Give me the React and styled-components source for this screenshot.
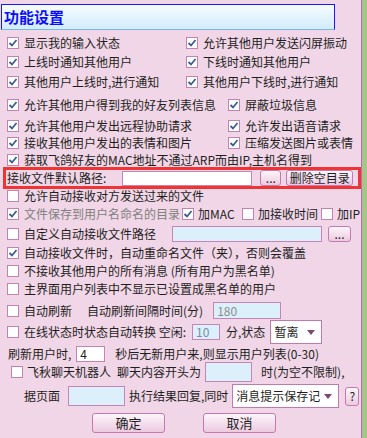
import React from 'react';
import styled, { createGlobalStyle } from 'styled-components';

const GlobalStyle = createGlobalStyle`
  html, body {
    margin: 0;
    padding: 0;
    background: #a6c48c;
  }
  body {
    font-family: "Noto Sans CJK SC", "Noto Sans", sans-serif;
    font-size: 12px;
    color: #1e1e1e;
  }
`;

const Panel = styled.div`
  width: 362px;
  height: 438px;
  background: #f0d6e6;
  border-right: 1px solid #b070a8;
  overflow: hidden;
  padding-top: 4px;
  box-sizing: border-box;
`;

const Title = styled.div`
  margin-left: 1px;
  width: 334px;
  height: 26px;
  box-sizing: border-box;
  border: 1px solid #1818ff;
  border-bottom-color: #7ab8e8;
  background: linear-gradient(#f6fcff, #d2ecfa);
  color: #0c0cff;
  font-size: 15px;
  font-weight: bold;
  line-height: 24px;
  padding-left: 2px;
`;

const Row = styled.div`
  display: flex;
  align-items: center;
  height: ${({ $h }) => $h || 16}px;
  margin-top: ${({ $mt }) => $mt || 0}px;
  padding-left: ${({ $pl }) => ($pl === undefined ? 7 : $pl)}px;
  white-space: nowrap;
  line-height: 16px;
`;

const PathBox = styled.div`
  display: flex;
  align-items: center;
  margin: -1px 0 0 3px;
  width: 358px;
  height: 22px;
  box-sizing: border-box;
  border: 3px solid #f03434;
  padding-left: 1px;
  white-space: nowrap;
  line-height: 16px;
`;

const Item = styled.label`
  display: flex;
  align-items: center;
  gap: ${({ $gap }) => ($gap === undefined ? 5 : $gap)}px;
  width: ${({ $w }) => ($w ? `${$w}px` : 'auto')};
  flex-shrink: 0;
  color: ${({ $muted }) => ($muted ? '#808080' : '#1e1e1e')};
`;

const Text = styled.span`
  margin-left: ${({ $ml }) => $ml || 0}px;
  flex-shrink: 0;
`;

const Box = styled.span`
  width: 12px;
  height: 12px;
  box-sizing: border-box;
  border: 1px solid #c282b4;
  background: #fff;
  display: inline-flex;
  align-items: center;
  justify-content: center;
  flex-shrink: 0;
`;

const Input = styled.div`
  width: ${({ $w }) => $w}px;
  height: ${({ $h }) => $h || 16}px;
  margin-left: ${({ $ml }) => $ml || 0}px;
  box-sizing: border-box;
  border: 1px solid #c684b6;
  background: ${({ $white }) => ($white ? '#fff' : '#dcf0fb')};
  color: ${({ $fg }) => $fg || '#1e1e1e'};
  font-size: 12px;
  display: flex;
  align-items: center;
  padding-left: 3px;
  flex-shrink: 0;
`;

const Button = styled.div`
  width: ${({ $w }) => $w}px;
  height: ${({ $h }) => $h || 16}px;
  margin-left: ${({ $ml }) => $ml || 0}px;
  box-sizing: border-box;
  border: 1px solid #c47ab0;
  border-radius: 3px;
  background: linear-gradient(#fdf5fa, #eccadf);
  display: flex;
  align-items: center;
  justify-content: center;
  font-size: ${({ $fs }) => $fs || 12}px;
  color: #1e1e1e;
  flex-shrink: 0;
`;

const Select = styled.div`
  width: ${({ $w }) => $w}px;
  height: 24px;
  margin-left: ${({ $ml }) => $ml || 0}px;
  box-sizing: border-box;
  border: 1px solid #c07ab0;
  background: #fff;
  display: flex;
  align-items: center;
  justify-content: space-between;
  padding: 0 6px 0 3px;
  font-size: 12px;
  flex-shrink: 0;
`;

const Arrow = styled.span`
  width: 0;
  height: 0;
  border-left: 4px solid transparent;
  border-right: 4px solid transparent;
  border-top: 5px solid #7a4a70;
`;

const Check = ({ on }) => (
  <Box>
    {on && (
      <svg width="10" height="10" viewBox="0 0 10 10">
        <path d="M1.5 5 L4 7.5 L8.5 2" fill="none" stroke="#3d5d8f" strokeWidth="1.8" />
      </svg>
    )}
  </Box>
);

const Opt = ({ on, children, ...rest }) => (
  <Item {...rest}>
    <Check on={on} />
    <span>{children}</span>
  </Item>
);

const App = () => (
  <>
    <GlobalStyle />
    <Panel>
      <Title>功能设置</Title>

      <Row $mt={5}>
        <Opt on $w={179}>显示我的输入状态</Opt>
        <Opt on>允许其他用户发送闪屏振动</Opt>
      </Row>
      <Row $mt={3}>
        <Opt on $w={179}>上线时通知其他用户</Opt>
        <Opt on>下线时通知其他用户</Opt>
      </Row>
      <Row $mt={4}>
        <Opt on $w={179}>其他用户上线时,进行通知</Opt>
        <Opt on>其他用户下线时,进行通知</Opt>
      </Row>
      <Row $mt={7}>
        <Opt on $w={221}>允许其他用户得到我的好友列表信息</Opt>
        <Opt on>屏蔽垃圾信息</Opt>
      </Row>
      <Row $mt={5}>
        <Opt on $w={221}>允许其他用户发出远程协助请求</Opt>
        <Opt on>允许发出语音请求</Opt>
      </Row>
      <Row $mt={1}>
        <Opt on $w={221}>接收其他用户发出的表情和图片</Opt>
        <Opt on>压缩发送图片或表情</Opt>
      </Row>
      <Row $mt={1}>
        <Opt on>获取飞鸽好友的MAC地址不通过ARP而由IP,主机名得到</Opt>
      </Row>

      <PathBox>
        <Text>接收文件默认路径:</Text>
        <Input $w={130} $h={15} $ml={16} $white />
        <Button $w={21} $ml={8}>...</Button>
        <Button $w={67} $ml={5}>删除空目录</Button>
      </PathBox>

      <Row $mt={-1}>
        <Opt>允许自动接收对方发送过来的文件</Opt>
      </Row>
      <Row $mt={2}>
        <Opt on $muted $w={175}>文件保存到用户名命名的目录</Opt>
        <Opt on $w={60} $gap={4}>加MAC</Opt>
        <Opt $w={79} $gap={4}>加接收时间</Opt>
        <Opt $gap={4}>加IP</Opt>
      </Row>
      <Row $mt={4}>
        <Opt>自定义自动接收文件路径</Opt>
        <Input $w={150} $ml={16} />
        <Button $w={23} $ml={6}>...</Button>
      </Row>
      <Row $mt={3}>
        <Opt on>自动接收文件时，自动重命名文件（夹），否则会覆盖</Opt>
      </Row>
      <Row $mt={2}>
        <Opt>不接收其他用户的所有消息 (所有用户为黑名单)</Opt>
      </Row>
      <Row $mt={2}>
        <Opt>主界面用户列表中不显示已设置成黑名单的用户</Opt>
      </Row>
      <Row $mt={5} $h={17}>
        <Opt>自动刷新</Opt>
        <Text $ml={15}>自动刷新间隔时间(分)</Text>
        <Input $w={68} $h={17} $ml={10} $fg="#8c8c8c">180</Input>
      </Row>
      <Row $mt={1} $h={24}>
        <Opt>在线状态时状态自动转换 空闲:</Opt>
        <Input $w={28} $ml={6} $fg="#7d8ca2">10</Input>
        <Text $ml={6}>分,状态</Text>
        <Select $w={52} $ml={5}>
          <span>暂离</span>
          <Arrow />
        </Select>
      </Row>
      <Row $mt={2} $pl={8}>
        <Text>刷新用户时,</Text>
        <Input $w={29} $ml={5} $white>4</Input>
        <Text $ml={10}>秒后无新用户来,则显示用户列表(0-30)</Text>
      </Row>
      <Row $mt={0} $h={20} $pl={11}>
        <Opt $gap={4}>飞秋聊天机器人</Opt>
        <Text $ml={6}>聊天内容开头为</Text>
        <Input $w={47} $h={20} $ml={4} />
        <Text $ml={9}>时(为空不限制),</Text>
      </Row>
      <Row $mt={2} $h={24} $pl={24}>
        <Text>据页面</Text>
        <Input $w={57} $h={20} $ml={8} />
        <Text $ml={4}>执行结果回复,同时</Text>
        <Select $w={107} $ml={4}>
          <span>消息提示保存记</span>
          <Arrow />
        </Select>
        <Button $w={14} $h={19} $ml={6}>?</Button>
      </Row>
      <Row $mt={5} $h={20} $pl={92}>
        <Button $w={73} $h={20} $fs={13}>确定</Button>
        <Button $w={73} $h={20} $ml={38} $fs={13}>取消</Button>
      </Row>
    </Panel>
  </>
);

export default App;
